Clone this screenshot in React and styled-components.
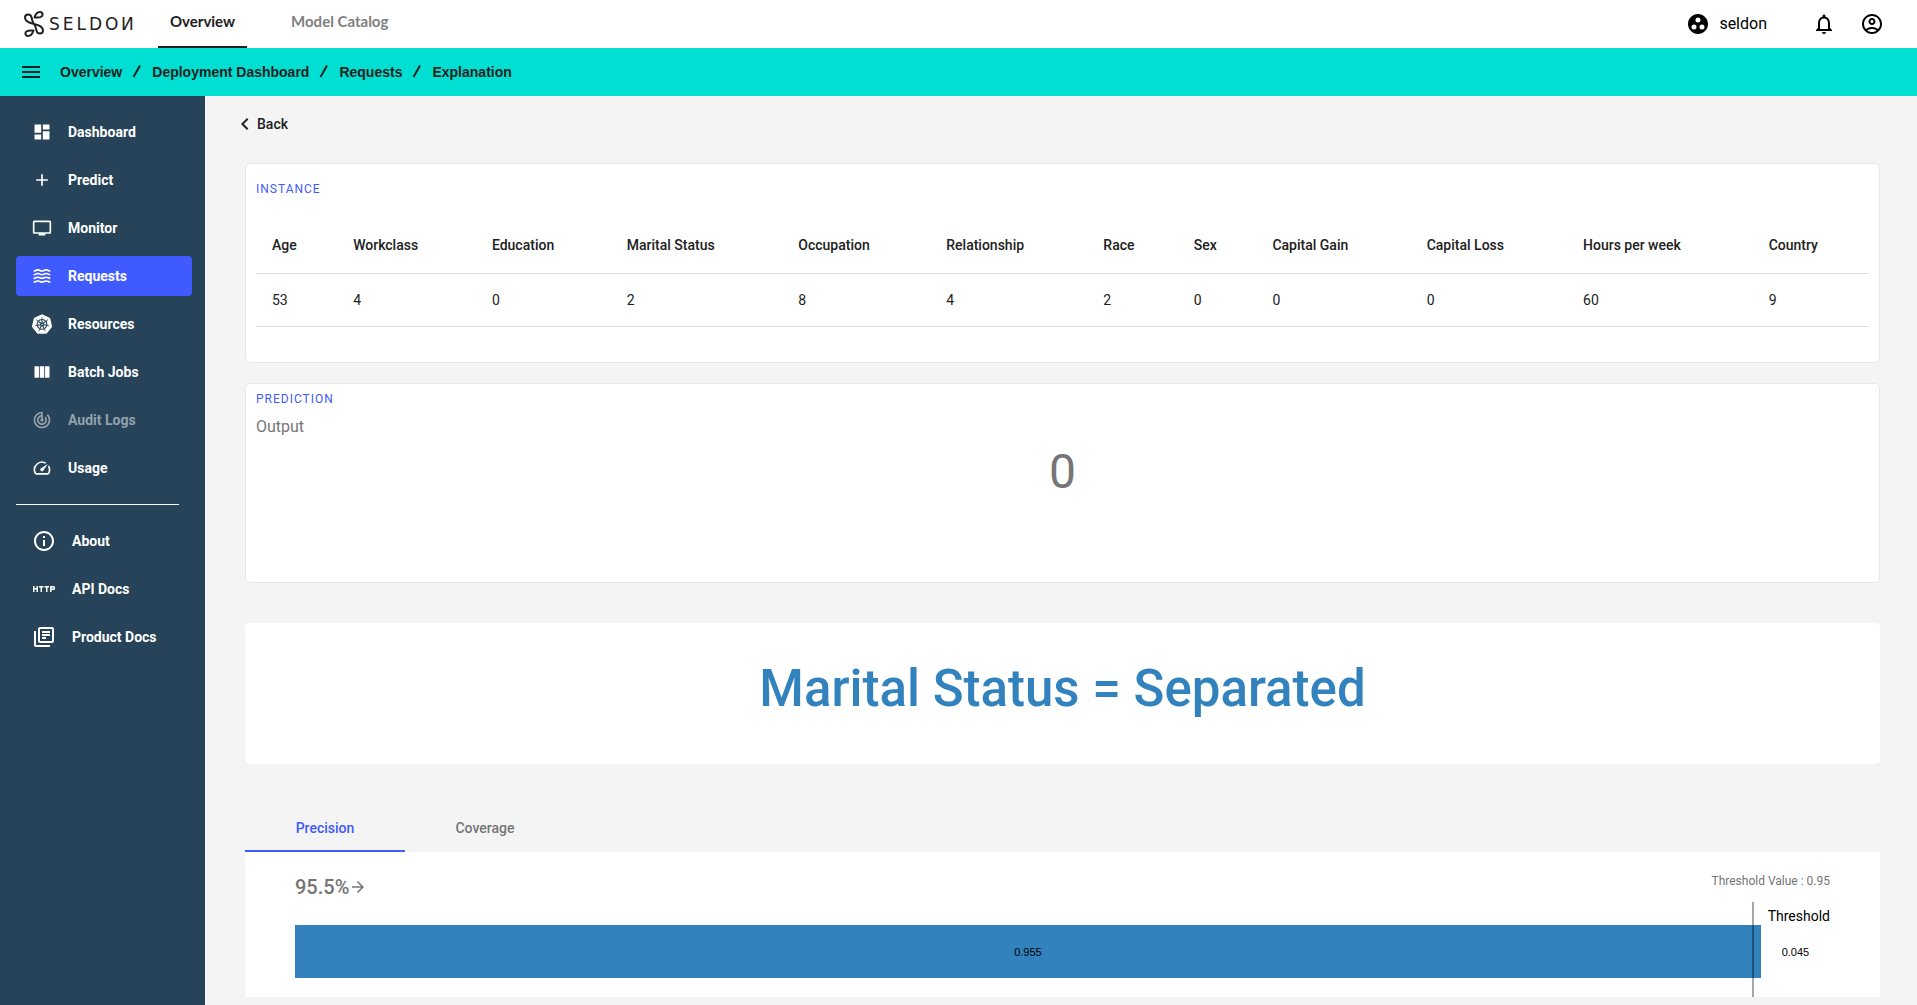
import React, { useState } from 'react';
import styled, { createGlobalStyle } from 'styled-components';
import {
    MdDashboard, MdAdd, MdTv, MdWaves, MdViewColumn, MdTrackChanges, MdSpeed,
    MdInfoOutline, MdHttp, MdOutlineLibraryBooks, MdGroupWork, MdNotificationsNone,
    MdOutlineAccountCircle, MdMenu, MdArrowForward, MdChevronLeft,
} from 'react-icons/md';
import { SiKubernetes } from 'react-icons/si';

const GlobalStyle = createGlobalStyle`
    * {
        box-sizing: border-box;
    }
    body {
        margin: 0;
        background: #f4f4f4;
        color: #212121;
        font-family: Roboto, sans-serif;
        font-size: 14px;
        line-height: 20px;
    }
    button {
        padding: 0;
        border: 0;
        background: none;
        color: inherit;
        font: inherit;
        cursor: pointer;
    }
    a {
        color: inherit;
        text-decoration: none;
    }
    svg {
        display: block;
        flex-shrink: 0;
    }
`

const Page = styled.div`
    min-height: 100vh;
    display: flex;
    flex-direction: column;
`

const TopBar = styled.header`
    display: flex;
    align-items: center;
    height: 48px;
    padding: 0 33px 0 24px;
    background: #fff;
`

const LogoLink = styled.a`
    display: flex;
    align-items: center;
    gap: 5px;
    width: 134px;
`

const LogoText = styled.span`
    font-family: "DejaVu Sans", sans-serif;
    font-size: 17px;
    letter-spacing: 3px;
    color: #212121;
`

const MirroredLetter = styled.span`
    display: inline-block;
    letter-spacing: 0;
    transform: scaleX(-1);
`

const TopTabs = styled.nav`
    display: flex;
    align-self: stretch;
    gap: 32px;
`

const TopTab = styled.a`
    display: flex;
    align-items: center;
    padding: 0 12px 4px;
    border-bottom: 2px solid ${props => props.$active ? '#212121' : 'transparent'};
    font-family: Lato, sans-serif;
    font-size: 15px;
    font-weight: 700;
    color: ${props => props.$active ? '#212121' : '#808080'};
`

const TopActions = styled.div`
    display: flex;
    align-items: center;
    gap: 24px;
    margin-left: auto;
    color: #000;
`

const Namespace = styled.button`
    display: flex;
    align-items: center;
    gap: 9px;
    margin-right: 21px;
    font-size: 16px;
`

const IconButton = styled.button`
    width: 24px;
    height: 24px;
`

const Breadcrumbs = styled.nav`
    display: flex;
    align-items: center;
    gap: 10px;
    height: 48px;
    padding: 0 19px;
    background: #00dfd1;
    font-family: "Liberation Sans", sans-serif;
    font-weight: 700;
`

const MenuButton = styled.button`
    width: 24px;
    height: 24px;
    margin-right: 7px;
`

const Body = styled.div`
    flex: 1;
    display: flex;
`

const Sidebar = styled.nav`
    width: 205px;
    flex-shrink: 0;
    padding: 16px 13px 16px 16px;
    background: #264359;
    color: #fff;
    font-weight: 700;
`

const SideList = styled.div`
    display: flex;
    flex-direction: column;
    gap: 8px;
`

const SideItem = styled.a`
    display: flex;
    align-items: center;
    gap: 16px;
    height: 40px;
    padding-left: 16px;
    border-radius: 4px;
    background: ${props => props.$active ? '#3f5bff' : 'transparent'};
    color: ${props => props.$disabled ? 'rgba(255, 255, 255, 0.5)' : '#fff'};
`

const SideIcon = styled.span`
    display: flex;
    justify-content: center;
    width: ${props => props.$wide ? 24 : 20}px;
`

const SideDivider = styled.hr`
    height: 1px;
    margin: 16px 13px 16px 0;
    border: 0;
    background: #fff;
`

const Main = styled.main`
    flex: 1;
    min-width: 0;
    padding: 18px 37px 8px 40px;
`

const BackButton = styled.button`
    display: flex;
    align-items: center;
    height: 20px;
    margin: 0 0 29px -12px;
    font-weight: 500;
`

const Card = styled.section`
    min-height: 200px;
    margin-bottom: 20px;
    padding: ${props => props.$tight ? 5 : 15}px 10px 10px;
    border: 1px solid #e8e8e8;
    border-radius: 5px;
    background: #fff;
`

const CardLabel = styled.h2`
    margin: 0;
    font-size: 12px;
    font-weight: 400;
    letter-spacing: 1px;
    text-transform: uppercase;
    color: #3f5bff;
`

const InstanceTable = styled.table`
    width: 100%;
    margin-top: 18px;
    border-collapse: collapse;

    th, td {
        padding: 16px;
        border-bottom: 1px solid #e0e0e0;
        text-align: left;
    }
    th {
        font-weight: 500;
        line-height: 24px;
    }
`

const OutputName = styled.div`
    margin-top: 4px;
    font-size: 16px;
    line-height: 28px;
    color: #757575;
`

const OutputValue = styled.div`
    font-size: 48px;
    line-height: 62px;
    text-align: center;
    color: #757575;
`

const AnchorCard = styled.section`
    margin: 40px 0;
    padding: 36px 16px 45px;
    border-radius: 5px;
    background: #fff;
    font-size: 51px;
    font-weight: 500;
    line-height: 60px;
    text-align: center;
    color: #3182bd;
`

const Tabs = styled.div`
    display: flex;
`

const Tab = styled.button`
    width: 160px;
    height: 48px;
    padding-top: 2px;
    border-bottom: 2px solid ${props => props.$active ? '#3f5bff' : 'transparent'};
    font-weight: 500;
    color: ${props => props.$active ? '#3f5bff' : '#757575'};
`

const Panel = styled.section`
    padding: 19px 50px 0;
    background: #fff;
    color: #757575;
`

const PanelHead = styled.div`
    display: flex;
    justify-content: space-between;
    height: 31px;
`

const Percent = styled.div`
    display: flex;
    align-items: center;
    font-size: 20px;
    font-weight: 500;
`

const ThresholdValue = styled.div`
    font-size: 12px;
`

const Chart = styled.div`
    position: relative;
    padding: 4px 0 19px;
    color: #000;
`

const ThresholdName = styled.div`
    margin-bottom: -1px;
    text-align: right;
`

const Bar = styled.div`
    display: flex;
    height: 53px;
    font-family: "Liberation Sans", sans-serif;
    font-size: 11px;
`

const BarPart = styled.div`
    display: flex;
    align-items: center;
    justify-content: center;
    background: ${props => props.$filled ? '#3182bd' : 'transparent'};
`

const ThresholdLine = styled.div`
    position: absolute;
    top: 0;
    bottom: 0;
    width: 2px;
    margin-left: -1px;
    background: rgba(0, 0, 0, 0.35);
`

const sideLinks = [
    { name: 'Dashboard', icon: <MdDashboard size={20} /> },
    { name: 'Predict', icon: <MdAdd size={20} /> },
    { name: 'Monitor', icon: <MdTv size={20} /> },
    { name: 'Requests', icon: <MdWaves size={20} />, active: true },
    { name: 'Resources', icon: <SiKubernetes size={20} /> },
    { name: 'Batch Jobs', icon: <MdViewColumn size={20} /> },
    { name: 'Audit Logs', icon: <MdTrackChanges size={20} />, disabled: true },
    { name: 'Usage', icon: <MdSpeed size={20} /> },
];

const helpLinks = [
    { name: 'About', icon: <MdInfoOutline size={24} /> },
    { name: 'API Docs', icon: <MdHttp size={24} /> },
    { name: 'Product Docs', icon: <MdOutlineLibraryBooks size={24} /> },
];

const crumbs = ['Overview', 'Deployment Dashboard', 'Requests', 'Explanation'];

const instance = [
    ['Age', 53], ['Workclass', 4], ['Education', 0], ['Marital Status', 2],
    ['Occupation', 8], ['Relationship', 4], ['Race', 2], ['Sex', 0],
    ['Capital Gain', 0], ['Capital Loss', 0], ['Hours per week', 60], ['Country', 9],
];

const stats = { Precision: 0.955, Coverage: 0.045 };
const threshold = 0.95;

function LogoMark() {
    return (
        <svg width="20" height="26" viewBox="0 0 20 26" fill="none" stroke="#212121" strokeWidth="2" strokeLinejoin="round">
            <path d="M10 13C5 12 1 10 1 6.500C1 2.500 7 2.500 7.500 6.500C8 9 8.500 11 10 13C15 14 19 16 19 19.500C19 23.500 13 23.500 12.500 19.500C12 17 11.500 15 10 13Z" />
            <path d="M10.500 6.500C11.500 3 13.500 1 16 1C18.500 1 19.500 4 17.500 5.500C15.500 7 13 6.500 10.500 6.500Z" />
            <path d="M9.500 19.500C8.500 23 6.500 25 4 25C1.500 25 .5 22 2.500 20.500C4.500 19 7 19.500 9.500 19.500Z" />
        </svg>
    )
}

function Slash() {
    return (
        <svg width="10" height="14" viewBox="0 0 10 14" stroke="#212121" strokeWidth="2" aria-hidden="true">
            <path d="M1.500 12L8 .5" />
        </svg>
    )
}

function SideLinks(props) {
    return (
        <SideList>
            {props.links.map(link => (
                <SideItem key={link.name} href="#" $active={link.active} $disabled={link.disabled}>
                    <SideIcon $wide={props.wide}>{link.icon}</SideIcon>
                    {link.name}
                </SideItem>
            ))}
        </SideList>
    )
}

function App() {
    const [tab, setTab] = useState('Precision');
    const value = stats[tab];
    const rest = Number((1 - value).toFixed(3));

    return (
        <Page>
            <GlobalStyle />
            <TopBar>
                <LogoLink href="#" aria-label="Seldon">
                    <LogoMark />
                    <LogoText>SELDO<MirroredLetter>N</MirroredLetter></LogoText>
                </LogoLink>
                <TopTabs>
                    <TopTab href="#" $active>Overview</TopTab>
                    <TopTab href="#">Model Catalog</TopTab>
                </TopTabs>
                <TopActions>
                    <Namespace><MdGroupWork size={24} />seldon</Namespace>
                    <IconButton aria-label="Notifications"><MdNotificationsNone size={24} /></IconButton>
                    <IconButton aria-label="Account"><MdOutlineAccountCircle size={24} /></IconButton>
                </TopActions>
            </TopBar>
            <Breadcrumbs>
                <MenuButton aria-label="Menu"><MdMenu size={24} /></MenuButton>
                {crumbs.map((crumb, i) => (
                    <React.Fragment key={crumb}>
                        {i > 0 && <Slash />}
                        <a href="#">{crumb}</a>
                    </React.Fragment>
                ))}
            </Breadcrumbs>
            <Body>
                <Sidebar>
                    <SideLinks links={sideLinks} />
                    <SideDivider />
                    <SideLinks links={helpLinks} wide />
                </Sidebar>
                <Main>
                    <BackButton><MdChevronLeft size={24} />Back</BackButton>
                    <Card>
                        <CardLabel>Instance</CardLabel>
                        <InstanceTable>
                            <thead>
                                <tr>{instance.map(([name]) => <th key={name} scope="col">{name}</th>)}</tr>
                            </thead>
                            <tbody>
                                <tr>{instance.map(([name, val]) => <td key={name}>{val}</td>)}</tr>
                            </tbody>
                        </InstanceTable>
                    </Card>
                    <Card $tight>
                        <CardLabel>Prediction</CardLabel>
                        <OutputName>Output</OutputName>
                        <OutputValue>0</OutputValue>
                    </Card>
                    <AnchorCard>Marital Status = Separated</AnchorCard>
                    <Tabs role="tablist">
                        {Object.keys(stats).map(name => (
                            <Tab key={name} role="tab" aria-selected={tab === name} $active={tab === name} onClick={() => setTab(name)}>
                                {name}
                            </Tab>
                        ))}
                    </Tabs>
                    <Panel role="tabpanel">
                        <PanelHead>
                            <Percent>{(value * 100).toFixed(1)}%<MdArrowForward size={18} /></Percent>
                            <ThresholdValue>Threshold Value : {threshold}</ThresholdValue>
                        </PanelHead>
                        <Chart>
                            <ThresholdName>Threshold</ThresholdName>
                            <Bar>
                                <BarPart $filled style={{ width: `${value * 100}%` }}>{value}</BarPart>
                                <BarPart style={{ width: `${rest * 100}%` }}>{rest}</BarPart>
                            </Bar>
                            <ThresholdLine style={{ left: `${threshold * 100}%` }} />
                        </Chart>
                    </Panel>
                </Main>
            </Body>
        </Page>
    )
}

export default App;
